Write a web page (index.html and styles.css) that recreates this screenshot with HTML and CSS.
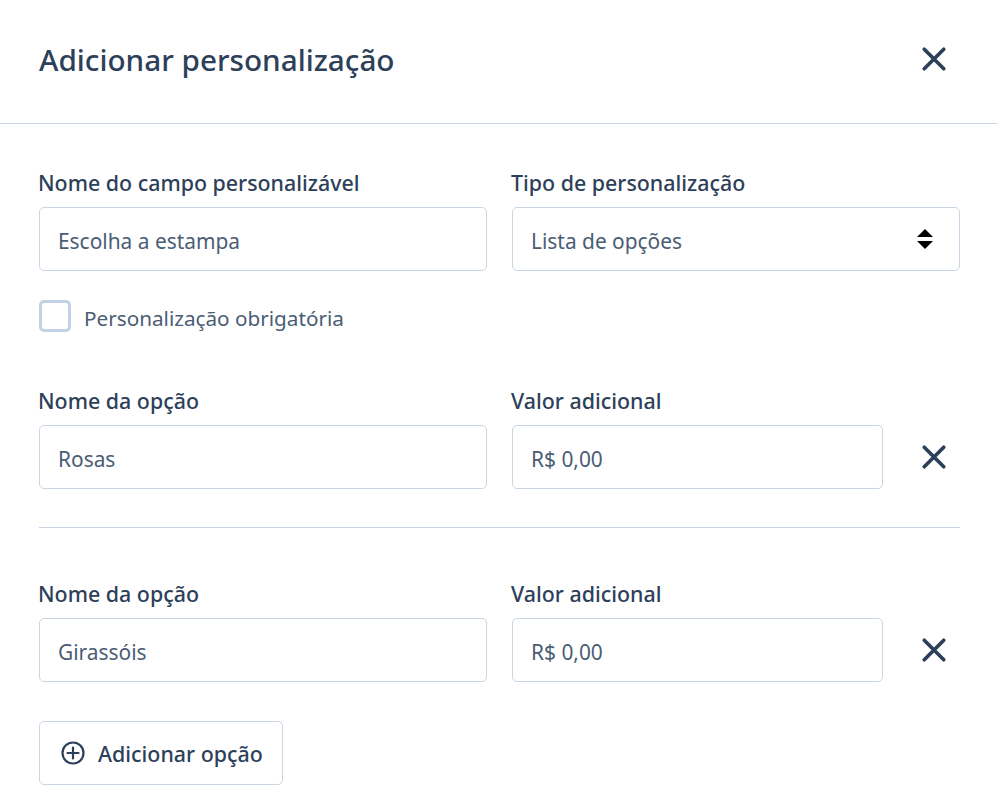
FILE: index.html
```html
<!DOCTYPE html>
<html lang="en">
<head>
    <meta charset="UTF-8">
    <meta name="viewport" content="width=device-width, initial-scale=1.0">
    <title>Adicionar personalização</title>
    <link rel="stylesheet" href="styles.css">
</head>
<body>
    <header class="modal-header">
        <h1>Adicionar personalização</h1>
        <button class="icon-button" aria-label="Fechar">
            <svg viewBox="0 0 24 24"><path d="M3 3L21 21M21 3L3 21"/></svg>
        </button>
    </header>

    <main class="modal-body">
        <div class="row">
            <div class="field">
                <label>Nome do campo personalizável</label>
                <input type="text" value="Escolha a estampa">
            </div>
            <div class="field">
                <label>Tipo de personalização</label>
                <div class="select">
                    <span>Lista de opções</span>
                    <svg viewBox="0 0 16 20"><path d="M8 0L16 8H0ZM0 12H16L8 20Z"/></svg>
                </div>
            </div>
        </div>

        <div class="check-row">
            <span class="checkbox"></span>
            <span class="check-text">Personalização obrigatória</span>
        </div>

        <div class="row option-row">
            <div class="field">
                <label>Nome da opção</label>
                <input type="text" value="Rosas">
            </div>
            <div class="field field-value">
                <label>Valor adicional</label>
                <div class="value-line">
                    <input type="text" value="R$ 0,00">
                    <button class="icon-button" aria-label="Remover">
                        <svg viewBox="0 0 24 24"><path d="M3 3L21 21M21 3L3 21"/></svg>
                    </button>
                </div>
            </div>
        </div>

        <hr class="divider">

        <div class="row">
            <div class="field">
                <label>Nome da opção</label>
                <input type="text" value="Girassóis">
            </div>
            <div class="field field-value">
                <label>Valor adicional</label>
                <div class="value-line">
                    <input type="text" value="R$ 0,00">
                    <button class="icon-button" aria-label="Remover">
                        <svg viewBox="0 0 24 24"><path d="M3 3L21 21M21 3L3 21"/></svg>
                    </button>
                </div>
            </div>
        </div>

        <button class="add-button">
            <svg viewBox="0 0 24 24"><circle cx="12" cy="12" r="10.5"/><path d="M12 6.5V17.5M6.5 12H17.5"/></svg>
            Adicionar opção
        </button>
    </main>
</body>
</html>
```

FILE: styles.css
```css
* {
    box-sizing: border-box;
}
body {
    margin: 0;
    font-family: "Noto Sans", "Open Sans", sans-serif;
    color: #2d4059;
    background: white;
}
.modal-header {
    display: flex;
    align-items: center;
    justify-content: space-between;
    height: 124px;
    padding: 0 50px 6px 39px;
    border-bottom: 1px solid #c9d5e3;
}
.modal-header h1 {
    margin: 0 0 -2px;
    font-size: 29.7px;
    font-weight: 500;
}
.icon-button {
    display: flex;
    width: 26px;
    height: 26px;
    padding: 0;
    border: none;
    background: none;
}
.icon-button svg {
    width: 26px;
    height: 26px;
    fill: none;
    stroke: #2d4059;
    stroke-width: 3.4;
    stroke-linecap: round;
}
.modal-body {
    display: flex;
    flex-direction: column;
    align-items: flex-start;
    padding: 44px 37px 0 39px;
}
.row {
    display: grid;
    grid-template-columns: 448px 448px;
    gap: 25px;
    width: 100%;
}
.field label {
    display: block;
    height: 29px;
    margin: 0 0 10px -1px;
    font-size: 21.4px;
    font-weight: 500;
    line-height: 29px;
}
input, .select {
    width: 100%;
    height: 64px;
    padding: 4px 18px 0;
    border: 1px solid #c9d5e3;
    border-radius: 5px;
    font-family: inherit;
    font-size: 20.9px;
    color: #4a5d75;
    background: white;
}
.select {
    display: flex;
    align-items: center;
    justify-content: space-between;
    padding-right: 26px;
}
.select svg {
    width: 16px;
    height: 20px;
    margin-top: -4px;
    fill: black;
}
.check-row {
    display: flex;
    align-items: center;
    gap: 13px;
    margin-top: 29px;
    font-size: 20.7px;
    color: #4a5d75;
}
.check-text {
    padding-top: 4px;
}
.checkbox {
    width: 32px;
    height: 32px;
    border: 3px solid #c3d1e2;
    border-radius: 5px;
}
.option-row {
    margin-top: 54px;
}
.value-line {
    display: flex;
    align-items: center;
    justify-content: space-between;
    padding-right: 13px;
}
.value-line input {
    width: 371px;
}
.divider {
    width: 921px;
    margin: 38px 0 51px;
    border: none;
    border-top: 1px solid #c9d5e3;
}
.add-button {
    display: flex;
    align-items: center;
    gap: 13px;
    height: 64px;
    margin-top: 39px;
    padding: 0 19px 0 21px;
    border: 1px solid #c9d5e3;
    border-radius: 5px;
    font-family: inherit;
    font-size: 21.4px;
    font-weight: 500;
    color: #2d4059;
    background: white;
}
.add-button svg {
    width: 24px;
    height: 24px;
    fill: none;
    stroke: #2d4059;
    stroke-width: 2.2;
    stroke-linecap: round;
}
```
